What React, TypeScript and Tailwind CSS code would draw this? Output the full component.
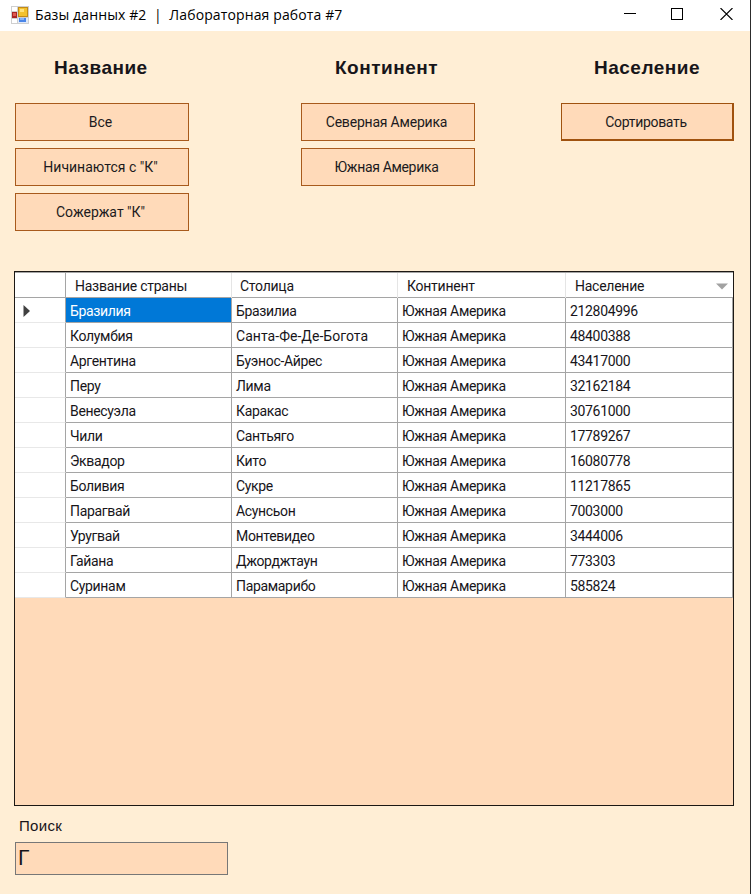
const rows: [string, string, string][] = [
  ['Бразилия', 'Бразилиа', '212804996'],
  ['Колумбия', 'Санта-Фе-Де-Богота', '48400388'],
  ['Аргентина', 'Буэнос-Айрес', '43417000'],
  ['Перу', 'Лима', '32162184'],
  ['Венесуэла', 'Каракас', '30761000'],
  ['Чили', 'Сантьяго', '17789267'],
  ['Эквадор', 'Кито', '16080778'],
  ['Боливия', 'Сукре', '11217865'],
  ['Парагвай', 'Асунсьон', '7003000'],
  ['Уругвай', 'Монтевидео', '3444006'],
  ['Гайана', 'Джорджтаун', '773303'],
  ['Суринам', 'Парамарибо', '585824'],
];

const columns = 'grid grid-cols-[51px_166px_166px_168px_167px]';

function AppIcon() {
  return (
    <svg className="mt-[2px]" width="18" height="18" viewBox="0 0 18 18" shapeRendering="crispEdges">
      <rect width="18" height="18" fill="#cfcfcf" />
      <rect x="1" y="1" width="5" height="4" fill="#fff" />
      <rect x="1" y="13" width="5" height="4" fill="#fff" />
      <rect x="7" y="12" width="10" height="5" fill="#dfe9fa" />
      <rect x="7" y="1" width="10" height="10" fill="#c28a16" />
      <rect x="8" y="2" width="8" height="8" fill="#f2c12e" />
      <rect x="9" y="3" width="4" height="3" fill="#ffe27a" />
      <rect x="1" y="6" width="5" height="6" fill="#a92525" />
      <rect x="2" y="7" width="3" height="3" fill="#df5a50" />
      <rect x="8" y="12" width="7" height="4" fill="#4a86e8" />
      <rect x="9" y="12" width="4" height="2" fill="#86b3f7" />
    </svg>
  );
}

function Heading({ children, className }: { children: string; className: string }) {
  return (
    <h2 className={`mb-[23px] h-[26px] whitespace-nowrap font-['Liberation_Sans',sans-serif] text-[19px] leading-[27px] font-bold tracking-[0.5px] ${className}`}>
      {children}
    </h2>
  );
}

function Button({ children, active = false, className = '' }: { children: string; active?: boolean; className?: string }) {
  return (
    <button
      className={`h-[38px] border bg-[#ffdab9] text-center text-[14px] text-[#1c1a20] ${active ? 'border-r-2 border-b-2 border-[#a0520f] pt-[2px] pr-[2px]' : 'border-[#a85a1c] pt-px pr-[3px]'} ${className}`}
    >
      {children}
    </button>
  );
}

export default function App() {
  return (
    <div className="flex h-[894px] w-[751px] flex-col overflow-hidden border-r border-[#2c2c2c] bg-[#ffeed5] font-[Roboto,sans-serif] text-[14px] text-[#17151a]">
      <header className="flex h-[31px] shrink-0 items-center bg-white pb-[3px] pl-[11px]">
        <AppIcon />
        <h1 className="ml-[6px] whitespace-pre font-['Open_Sans',sans-serif] text-[14px] tracking-[0.12px] text-black">
          {'Базы данных #2  |  Лабораторная работа #7'}
        </h1>
        <div className="mr-[17px] ml-auto flex items-center">
          <svg className="mr-[35px]" width="12" height="12" shapeRendering="crispEdges"><path d="M0 5.5H12" stroke="#000" /></svg>
          <svg className="mr-[37px]" width="12" height="12" shapeRendering="crispEdges"><rect x=".5" y=".5" width="11" height="11" fill="none" stroke="#000" /></svg>
          <svg width="13" height="12"><path d="M.5 0L12.5 12M12.5 0L.5 12" stroke="#000" strokeWidth="1.1" /></svg>
        </div>
      </header>

      <section className="flex h-[240px] shrink-0 pt-[23px] pl-[15px]">
        <div className="flex w-[174px] flex-col">
          <Heading className="pl-[39px]">Название</Heading>
          <div className="flex flex-col gap-[7px]">
            <Button>Все</Button>
            <Button>Ничинаются с "К"</Button>
            <Button>Сожержат "К"</Button>
          </div>
        </div>
        <div className="ml-[112px] flex w-[174px] flex-col">
          <Heading className="pl-[34px]">Континент</Heading>
          <div className="flex flex-col gap-[7px]">
            <Button className="tracking-[-0.2px]">Северная Америка</Button>
            <Button className="tracking-[-0.33px]">Южная Америка</Button>
          </div>
        </div>
        <div className="ml-[86px] flex w-[173px] flex-col">
          <Heading className="pl-[33px]">Население</Heading>
          <Button active className="tracking-[-0.3px]">Сортировать</Button>
        </div>
      </section>

      <section className="ml-[14px] h-[535px] w-[720px] shrink-0 border border-[#1c1814] bg-[#ffdab9]">
        <div className={`${columns} h-[26px] border-t border-b border-[#a5a5a5] bg-white leading-[26px] tracking-[-0.25px]`}>
          <div className="border-r border-[#a5a5a5]" />
          <div className="border-r border-[#e5e5e5] pl-[9px]">Название страны</div>
          <div className="border-r border-[#e5e5e5] pl-[8px]">Столица</div>
          <div className="border-r border-[#e5e5e5] pl-[9px]">Континент</div>
          <div className="flex items-center justify-between pr-[5px] pl-[9px]">
            Население
            <svg width="12" height="7"><path d="M0 .5H12L6 6.5Z" fill="#a2a2a2" /></svg>
          </div>
        </div>
        {rows.map(([country, capital, population], index) => (
          <div key={country} className={`${columns} h-[25px] bg-white leading-[27px] tracking-[-0.33px] whitespace-nowrap`}>
            <div className="flex h-[25px] items-center border-r border-b border-r-[#a5a5a5] border-b-[#e8e8e8] pt-px pl-[8px]">
              {index === 0 && <svg width="8" height="12"><path d="M.5 0V12L7 6Z" fill="#404040" /></svg>}
            </div>
            <div className={`h-[25px] border-r border-b border-[#a5a5a5] pl-[4px] ${index === 0 ? 'bg-[#0078d7] text-white' : ''}`}>{country}</div>
            <div className={`h-[25px] border-r border-b border-[#a5a5a5] pl-[4px] ${capital.length > 14 ? 'tracking-[0.04px]' : ''}`}>{capital}</div>
            <div className="h-[25px] border-r border-b border-[#a5a5a5] pl-[4px]">Южная Америка</div>
            <div className="h-[25px] border-r border-b border-[#a5a5a5] pl-[4px]">{population}</div>
          </div>
        ))}
      </section>

      <footer className="pt-[9px] pl-[15px]">
        <label className="block h-[27px] pl-[4px] font-['Liberation_Sans',sans-serif] text-[15px] leading-[21px] tracking-[0.3px]">Поиск</label>
        <input
          className="block h-[33px] w-[213px] border border-[#777] bg-[#ffdab9] pb-[2px] pl-[2px] text-[21px] text-[#17151a] outline-none"
          defaultValue="Г"
        />
      </footer>
    </div>
  );
}
